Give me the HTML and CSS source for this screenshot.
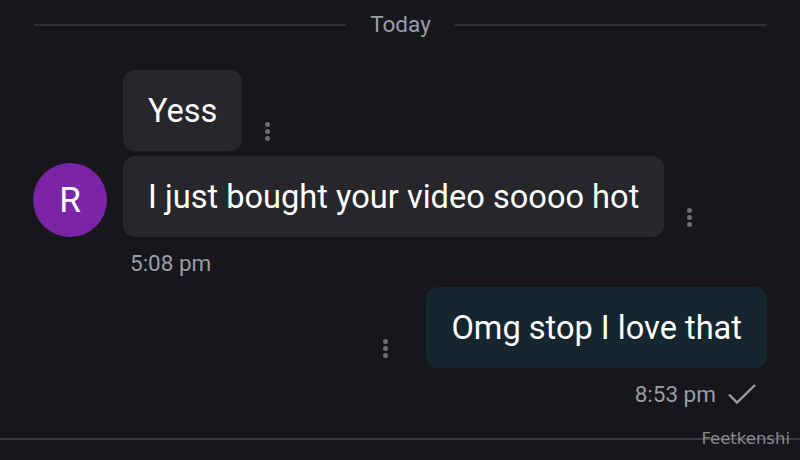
FILE: index.html
```html
<!DOCTYPE html>
<html>
<head>
<meta charset="utf-8">
<link rel="stylesheet" href="styles.css">
</head>
<body>
<div class="chat">
  <div class="day">
    <span class="line"></span>
    <span class="day-label">Today</span>
    <span class="line"></span>
  </div>

  <div class="group">
    <div class="avatar">R</div>
    <div class="stack">
      <div class="row">
        <div class="bubble in">Yess</div>
        <span class="kebab"><i></i><i></i><i></i></span>
      </div>
      <div class="row">
        <div class="bubble in">I just bought your video soooo hot</div>
        <span class="kebab"><i></i><i></i><i></i></span>
      </div>
    </div>
  </div>
  <div class="time in-time">5:08 pm</div>

  <div class="row out-row">
    <span class="kebab"><i></i><i></i><i></i></span>
    <div class="bubble out">Omg stop I love that</div>
  </div>
  <div class="out-meta">
    <span class="time">8:53 pm</span>
    <svg class="check" width="30" height="22" viewBox="0 0 30 22"><path d="M2 11.5 L10 19.5 L28 2" fill="none" stroke="#9a9ca4" stroke-width="2.4"/></svg>
  </div>

  <div class="bottom-line"></div>
  <div class="watermark">Feetkenshi</div>
</div>
</body>
</html>
```

FILE: styles.css
```css
html, body {
  margin: 0;
  padding: 0;
  background: #16161b;
  width: 800px;
  height: 460px;
  overflow: hidden;
}
.chat {
  position: relative;
  height: 460px;
  font-family: Roboto, "Liberation Sans", sans-serif;
  color: #ffffff;
}
.day {
  display: flex;
  align-items: center;
  padding: 9px 33px 0 34px;
  height: 30px;
  gap: 24px;
}
.line {
  flex: 1;
  height: 2px;
  background: #303036;
  margin-top: 2px;
}
.day-label {
  color: #9c9ea8;
  font-size: 22.5px;
  line-height: 28px;
}
.group {
  display: flex;
  align-items: flex-end;
  margin-top: 31px;
  padding-left: 33px;
}
.avatar {
  width: 74px;
  height: 74px;
  border-radius: 50%;
  background: #7b25a6;
  color: #fff;
  font-size: 35px;
  display: flex;
  align-items: center;
  justify-content: center;
  margin-right: 16px;
}
.stack {
  display: flex;
  flex-direction: column;
  gap: 5px;
}
.row {
  display: flex;
  align-items: flex-end;
  gap: 23px;
}
.bubble {
  height: 81px;
  box-sizing: border-box;
  padding: 0 25px;
  display: flex;
  align-items: center;
  font-size: 32.6px;
  border-radius: 12px;
  white-space: nowrap;
}
.bubble.in {
  background: #26262b;
}
.bubble.out {
  background: #15262e;
}
.kebab {
  display: flex;
  flex-direction: column;
  gap: 2px;
  margin-bottom: 10px;
}
.kebab i {
  display: block;
  width: 5px;
  height: 5px;
  border-radius: 50%;
  background: #6d6f77;
}
.time {
  color: #9a9ca4;
  font-size: 22.5px;
}
.in-time {
  padding-left: 130px;
  margin-top: 13px;
  line-height: 26px;
}
.out-row {
  justify-content: flex-end;
  padding-right: 33px;
  margin-top: 11px;
  gap: 38px;
}
.out-meta {
  display: flex;
  justify-content: flex-end;
  align-items: center;
  gap: 11px;
  padding-right: 43px;
  margin-top: 13px;
  line-height: 26px;
}
.bottom-line {
  margin-top: 31px;
  height: 2px;
  background: #3a3a40;
}
.watermark {
  position: absolute;
  right: 10px;
  top: 429px;
  font-family: "DejaVu Sans", sans-serif;
  font-size: 16.5px;
  color: #8a8a8e;
}
```
